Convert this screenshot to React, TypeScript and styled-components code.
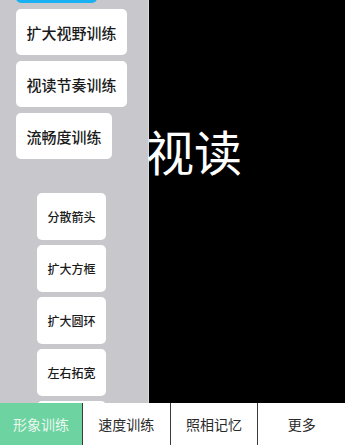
import React from 'react';
import styled, {createGlobalStyle} from 'styled-components';

const GlobalStyle = createGlobalStyle`
  * {
    box-sizing: border-box;
  }

  html, body {
    margin: 0;
    padding: 0;
    background: #ffffff;
    font-family: "Noto Sans CJK SC", "Noto Sans", sans-serif;
  }
`

const MAIN_ITEMS = [
  {id: 0, title: '视读训练', active: true},
  {id: 1, title: '扩大视野训练', active: false},
  {id: 2, title: '视读节奏训练', active: false},
  {id: 3, title: '流畅度训练', active: false},
];

const SUB_ITEMS = ['分散箭头', '扩大方框', '扩大圆环', '左右拓宽', '上下拓宽'];

const TABS = [
  {id: 0, title: '形象训练', active: true},
  {id: 1, title: '速度训练', active: false},
  {id: 2, title: '照相记忆', active: false},
  {id: 3, title: '更多', active: false},
];

export default function App() {
  return (
    <>
      <GlobalStyle/>
      <StyledScreen>
        <StyledMain>
          <StyledSidebar>
            <MainList>
              {MAIN_ITEMS.map((item) => (
                <MainButton key={item.id} $active={item.active}>{item.title}</MainButton>
              ))}
            </MainList>
            <SubList>
              {SUB_ITEMS.map((title) => (
                <SubButton key={title}>{title}</SubButton>
              ))}
            </SubList>
          </StyledSidebar>
          <StyledStage>
            <StageTitle>视读</StageTitle>
          </StyledStage>
        </StyledMain>
        <TabBar>
          {TABS.map((tab) => (
            <Tab key={tab.id} $active={tab.active}>{tab.title}</Tab>
          ))}
        </TabBar>
      </StyledScreen>
    </>
  );
}

const StyledScreen = styled.div`
  width: 345px;
  height: 445px;
  display: flex;
  flex-direction: column;
  overflow: hidden;
`

const StyledMain = styled.div`
  flex: 1;
  display: flex;
  min-height: 0;
`

const StyledSidebar = styled.div`
  width: 149px;
  flex-shrink: 0;
  background-color: #c8c7cc;
  border-right: 1px solid #dadade;
  overflow: hidden;
`

const MainList = styled.div`
  display: flex;
  flex-direction: column;
  align-items: flex-start;
  gap: 6px;
  margin-top: -43px;
  padding-left: 16px;
`

const MainButton = styled.div<{$active?: boolean}>`
  height: 46px;
  padding: 0 10.5px;
  display: flex;
  align-items: center;
  border-radius: 5px;
  font-size: 15px;
  font-weight: 500;
  color: ${({$active}) => $active ? '#ffffff' : '#1a1a1a'};
  background-color: ${({$active}) => $active ? '#19b1f1' : '#ffffff'};
  white-space: nowrap;
`

const SubList = styled.div`
  display: flex;
  flex-direction: column;
  gap: 5px;
  margin-top: 34px;
  padding-left: 37px;
`

const SubButton = styled.div`
  width: 69px;
  height: 47px;
  display: flex;
  align-items: center;
  justify-content: center;
  border-radius: 5px;
  background-color: #ffffff;
  font-size: 12px;
  font-weight: 500;
  color: #1a1a1a;
`

const StyledStage = styled.div`
  flex: 1;
  position: relative;
  background-color: #000000;
`

const StageTitle = styled.div`
  position: absolute;
  left: -3px;
  top: 126px;
  font-size: 48px;
  line-height: 1;
  color: #ffffff;
  white-space: nowrap;
`

const TabBar = styled.div`
  height: 42px;
  flex-shrink: 0;
  display: grid;
  grid-template-columns: 82px 1fr 1fr 1fr;
  background-color: #ffffff;
`

const Tab = styled.div<{$active?: boolean}>`
  display: flex;
  align-items: center;
  justify-content: center;
  font-size: 14px;
  color: ${({$active}) => $active ? '#e8f8ef' : '#2a2a2a'};
  background-color: ${({$active}) => $active ? '#6dd3a0' : '#ffffff'};
  border-left: ${({$active}) => $active ? 'none' : '1px solid #3c3c3c'};
`
